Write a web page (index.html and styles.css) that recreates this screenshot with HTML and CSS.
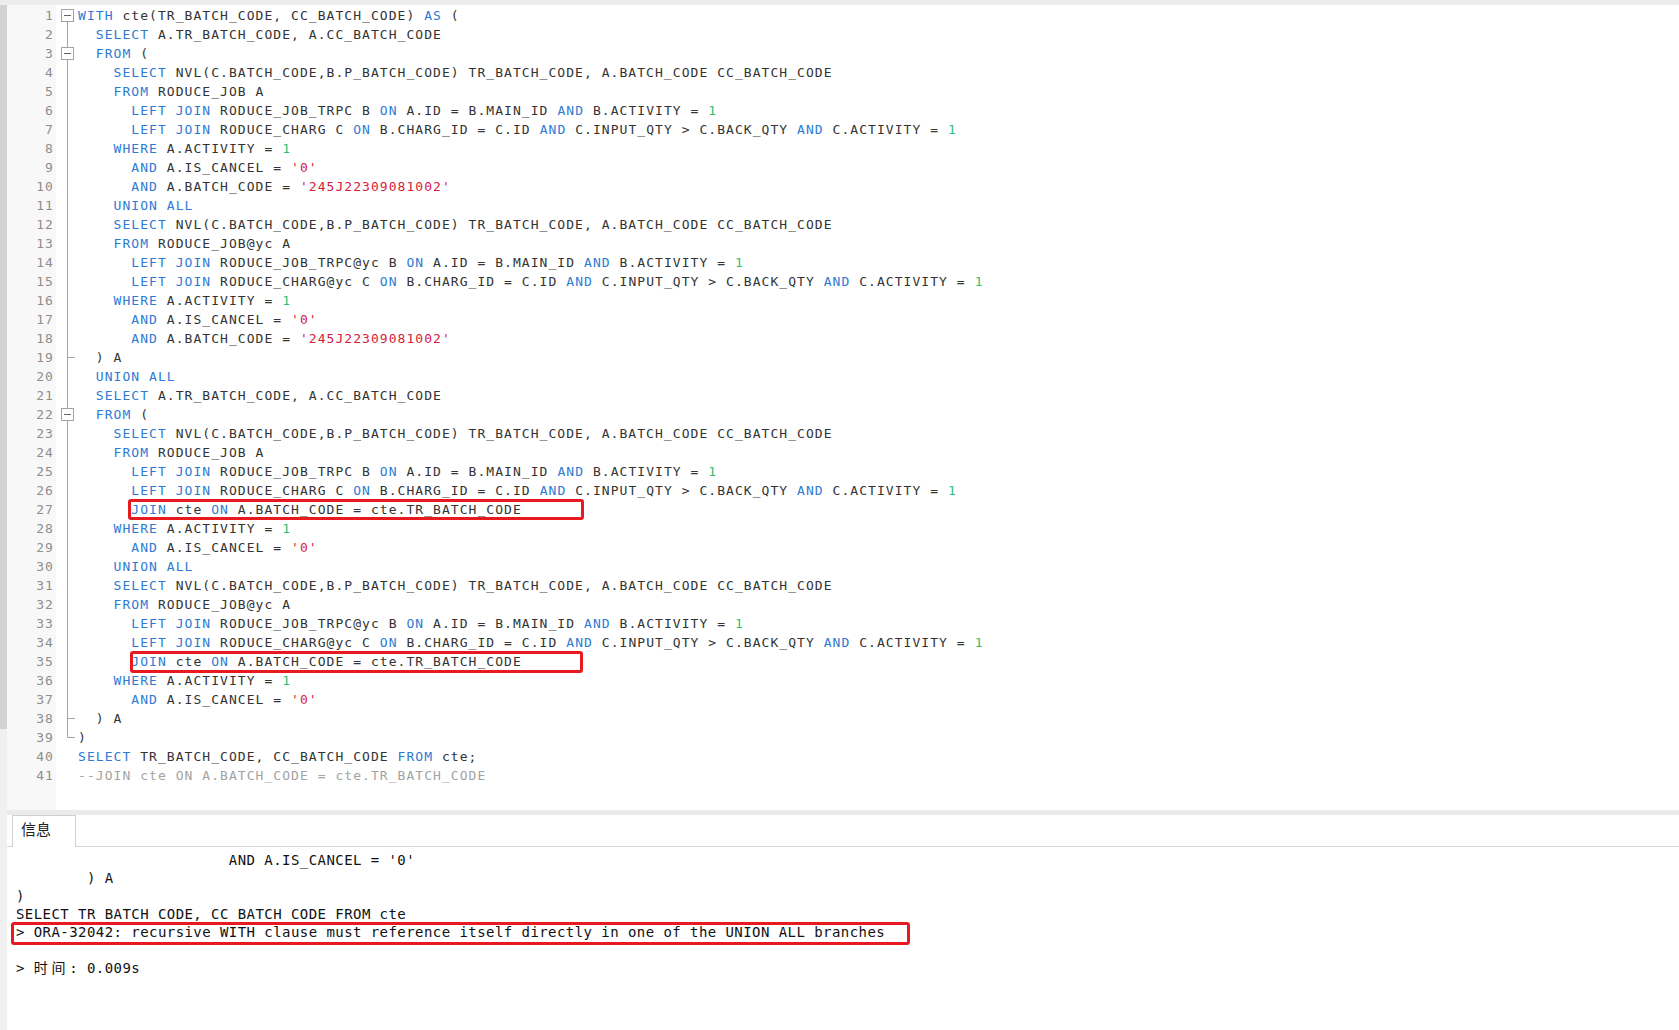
FILE: index.html
```html
<!DOCTYPE html>
<html lang="zh">
<head>
    <meta charset="UTF-8">
    <title>查询编辑器</title>
    <link rel="stylesheet" href="styles.css">
</head>
<body>
    <div class="topbar"></div>
    <div class="workspace">
        <div class="sidebar"><div class="thumb"></div></div>
        <div class="content">
            <div class="editor">
                <div class="gutter">
                    <div>1</div><div>2</div><div>3</div><div>4</div><div>5</div><div>6</div><div>7</div><div>8</div><div>9</div><div>10</div>
                    <div>11</div><div>12</div><div>13</div><div>14</div><div>15</div><div>16</div><div>17</div><div>18</div><div>19</div><div>20</div>
                    <div>21</div><div>22</div><div>23</div><div>24</div><div>25</div><div>26</div><div>27</div><div>28</div><div>29</div><div>30</div>
                    <div>31</div><div>32</div><div>33</div><div>34</div><div>35</div><div>36</div><div>37</div><div>38</div><div>39</div><div>40</div>
                    <div>41</div>
                </div>
                <div class="folds">
                    <svg width="22" height="779" viewBox="0 0 22 779">
                        <g stroke="#a3a3a3" stroke-width="1" fill="none">
                            <line x1="11.5" y1="16" x2="11.5" y2="47"/>
                            <line x1="11.5" y1="54" x2="11.5" y2="408"/>
                            <line x1="11.5" y1="415" x2="11.5" y2="731.5"/>
                            <line x1="11.5" y1="351.5" x2="19" y2="351.5"/>
                            <line x1="11.5" y1="712.5" x2="19" y2="712.5"/>
                            <line x1="11.5" y1="731.5" x2="19" y2="731.5"/>
                            <rect x="5.5" y="3.5" width="12" height="12" fill="#fff"/>
                            <rect x="5.5" y="41.5" width="12" height="12" fill="#fff"/>
                            <rect x="5.5" y="402.5" width="12" height="12" fill="#fff"/>
                        </g>
                        <g stroke="#666" stroke-width="1">
                            <line x1="8" y1="9.5" x2="15" y2="9.5"/>
                            <line x1="8" y1="47.5" x2="15" y2="47.5"/>
                            <line x1="8" y1="408.5" x2="15" y2="408.5"/>
                        </g>
                    </svg>
                </div>
                <div class="code">
<div class="line"><span class="k">WITH</span> cte(TR_BATCH_CODE, CC_BATCH_CODE) <span class="k">AS</span> (</div>
<div class="line">  <span class="k">SELECT</span> A.TR_BATCH_CODE, A.CC_BATCH_CODE</div>
<div class="line">  <span class="k">FROM</span> (</div>
<div class="line">    <span class="k">SELECT</span> NVL(C.BATCH_CODE,B.P_BATCH_CODE) TR_BATCH_CODE, A.BATCH_CODE CC_BATCH_CODE</div>
<div class="line">    <span class="k">FROM</span> RODUCE_JOB A</div>
<div class="line">      <span class="k">LEFT JOIN</span> RODUCE_JOB_TRPC B <span class="k">ON</span> A.ID = B.MAIN_ID <span class="k">AND</span> B.ACTIVITY = <span class="n">1</span></div>
<div class="line">      <span class="k">LEFT JOIN</span> RODUCE_CHARG C <span class="k">ON</span> B.CHARG_ID = C.ID <span class="k">AND</span> C.INPUT_QTY &gt; C.BACK_QTY <span class="k">AND</span> C.ACTIVITY = <span class="n">1</span></div>
<div class="line">    <span class="k">WHERE</span> A.ACTIVITY = <span class="n">1</span></div>
<div class="line">      <span class="k">AND</span> A.IS_CANCEL = <span class="s">'0'</span></div>
<div class="line">      <span class="k">AND</span> A.BATCH_CODE = <span class="s">'245J22309081002'</span></div>
<div class="line">    <span class="k">UNION ALL</span></div>
<div class="line">    <span class="k">SELECT</span> NVL(C.BATCH_CODE,B.P_BATCH_CODE) TR_BATCH_CODE, A.BATCH_CODE CC_BATCH_CODE</div>
<div class="line">    <span class="k">FROM</span> RODUCE_JOB@yc A</div>
<div class="line">      <span class="k">LEFT JOIN</span> RODUCE_JOB_TRPC@yc B <span class="k">ON</span> A.ID = B.MAIN_ID <span class="k">AND</span> B.ACTIVITY = <span class="n">1</span></div>
<div class="line">      <span class="k">LEFT JOIN</span> RODUCE_CHARG@yc C <span class="k">ON</span> B.CHARG_ID = C.ID <span class="k">AND</span> C.INPUT_QTY &gt; C.BACK_QTY <span class="k">AND</span> C.ACTIVITY = <span class="n">1</span></div>
<div class="line">    <span class="k">WHERE</span> A.ACTIVITY = <span class="n">1</span></div>
<div class="line">      <span class="k">AND</span> A.IS_CANCEL = <span class="s">'0'</span></div>
<div class="line">      <span class="k">AND</span> A.BATCH_CODE = <span class="s">'245J22309081002'</span></div>
<div class="line">  ) A</div>
<div class="line">  <span class="k">UNION ALL</span></div>
<div class="line">  <span class="k">SELECT</span> A.TR_BATCH_CODE, A.CC_BATCH_CODE</div>
<div class="line">  <span class="k">FROM</span> (</div>
<div class="line">    <span class="k">SELECT</span> NVL(C.BATCH_CODE,B.P_BATCH_CODE) TR_BATCH_CODE, A.BATCH_CODE CC_BATCH_CODE</div>
<div class="line">    <span class="k">FROM</span> RODUCE_JOB A</div>
<div class="line">      <span class="k">LEFT JOIN</span> RODUCE_JOB_TRPC B <span class="k">ON</span> A.ID = B.MAIN_ID <span class="k">AND</span> B.ACTIVITY = <span class="n">1</span></div>
<div class="line">      <span class="k">LEFT JOIN</span> RODUCE_CHARG C <span class="k">ON</span> B.CHARG_ID = C.ID <span class="k">AND</span> C.INPUT_QTY &gt; C.BACK_QTY <span class="k">AND</span> C.ACTIVITY = <span class="n">1</span></div>
<div class="line">      <span class="k">JOIN</span> cte <span class="k">ON</span> A.BATCH_CODE = cte.TR_BATCH_CODE<span class="mark"></span></div>
<div class="line">    <span class="k">WHERE</span> A.ACTIVITY = <span class="n">1</span></div>
<div class="line">      <span class="k">AND</span> A.IS_CANCEL = <span class="s">'0'</span></div>
<div class="line">    <span class="k">UNION ALL</span></div>
<div class="line">    <span class="k">SELECT</span> NVL(C.BATCH_CODE,B.P_BATCH_CODE) TR_BATCH_CODE, A.BATCH_CODE CC_BATCH_CODE</div>
<div class="line">    <span class="k">FROM</span> RODUCE_JOB@yc A</div>
<div class="line">      <span class="k">LEFT JOIN</span> RODUCE_JOB_TRPC@yc B <span class="k">ON</span> A.ID = B.MAIN_ID <span class="k">AND</span> B.ACTIVITY = <span class="n">1</span></div>
<div class="line">      <span class="k">LEFT JOIN</span> RODUCE_CHARG@yc C <span class="k">ON</span> B.CHARG_ID = C.ID <span class="k">AND</span> C.INPUT_QTY &gt; C.BACK_QTY <span class="k">AND</span> C.ACTIVITY = <span class="n">1</span></div>
<div class="line">      <span class="k">JOIN</span> cte <span class="k">ON</span> A.BATCH_CODE = cte.TR_BATCH_CODE<span class="mark mark-b"></span></div>
<div class="line">    <span class="k">WHERE</span> A.ACTIVITY = <span class="n">1</span></div>
<div class="line">      <span class="k">AND</span> A.IS_CANCEL = <span class="s">'0'</span></div>
<div class="line">  ) A</div>
<div class="line">)</div>
<div class="line"><span class="k">SELECT</span> TR_BATCH_CODE, CC_BATCH_CODE <span class="k">FROM</span> cte;</div>
<div class="line"><span class="c">--JOIN cte ON A.BATCH_CODE = cte.TR_BATCH_CODE</span></div>
                </div>
            </div>
            <div class="divider"></div>
            <div class="tabs">
                <div class="tab">信息</div>
            </div>
            <div class="output">
<div class="out-line">                        AND A.IS_CANCEL = '0'</div>
<div class="out-line">        ) A</div>
<div class="out-line">)</div>
<div class="out-line">SELECT TR_BATCH_CODE, CC_BATCH_CODE FROM cte</div>
<div class="out-line">&gt; ORA-32042: recursive WITH clause must reference itself directly in one of the UNION ALL branches<span class="mark mark-err"></span></div>
<div class="out-line"> </div>
<div class="out-line">&gt; <span class="cjk">时间</span>: 0.009s</div>
            </div>
        </div>
    </div>
</body>
</html>
```

FILE: styles.css
```css
body {
    margin: 0;
    background-color: #fff;
    font-family: "DejaVu Sans Mono", monospace;
    color: #333;
    overflow: hidden;
}
.topbar {
    height: 5px;
    background-color: #ececec;
}
.workspace {
    display: flex;
    height: 1025px;
}
.sidebar {
    width: 7px;
    background-color: #f0f0f0;
}
.sidebar .thumb {
    height: 724px;
    background-color: #d2d2d2;
}
.content {
    flex: 1;
    display: flex;
    flex-direction: column;
    min-width: 0;
}

/* Editor */
.editor {
    height: 805px;
    display: flex;
    font-size: 13px;
    letter-spacing: 1.05px;
}
.gutter {
    width: 49px;
    padding-top: 1px;
    background-color: #f8f8f8;
    color: #8e8e8e;
    text-align: right;
    line-height: 19px;
}
.gutter div {
    height: 19px;
    padding-right: 2px;
}
.folds {
    width: 22px;
    padding-top: 1px;
}
.folds svg {
    display: block;
}
.code {
    flex: 1;
    padding-top: 1px;
}
.line {
    height: 19px;
    line-height: 19px;
    white-space: pre;
    position: relative;
}
.k { color: #2d7bd3; }
.n { color: #2fbf71; }
.s { color: #d6203d; }
.c { color: #a3a3a3; }

/* red annotation boxes */
.mark {
    position: absolute;
    left: 50px;
    top: -1px;
    width: 456px;
    height: 21px;
    box-sizing: border-box;
    border: 3px solid #e8191f;
    border-radius: 3px;
}
.mark-b {
    left: 52px;
    width: 453px;
    height: 22px;
}

/* Bottom panel */
.divider {
    height: 5px;
    background-color: #ebebeb;
}
.tabs {
    display: flex;
    height: 32px;
    padding-left: 5px;
    box-shadow: inset 0 -1px #d6d6d6;
}
.tab {
    width: 64px;
    height: 32px;
    box-sizing: border-box;
    padding-left: 8px;
    border: 1px solid #d0d0d0;
    border-bottom: none;
    background-color: #fff;
    font-family: "Noto Sans CJK SC", sans-serif;
    font-size: 15px;
    line-height: 25px;
    color: #222;
}
.output {
    flex: 1;
    padding: 5px 0 0 9px;
    font-size: 14px;
    letter-spacing: 0.44px;
    color: #111;
}
.out-line {
    height: 17.9px;
    line-height: 17.9px;
    white-space: pre;
    position: relative;
}
.cjk {
    font-family: "Noto Sans CJK SC", sans-serif;
    letter-spacing: 3.74px;
}
.mark-err {
    left: -5px;
    top: -2px;
    width: 899px;
    height: 23px;
}
```
